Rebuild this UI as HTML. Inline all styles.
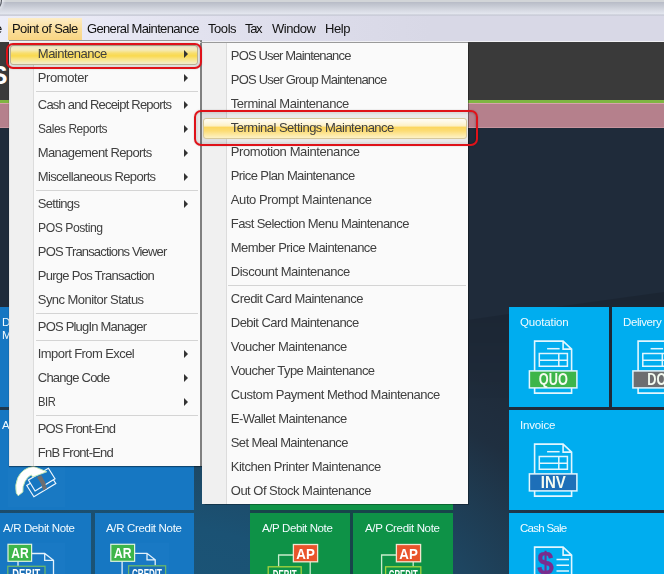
<!DOCTYPE html>
<html>
<head>
<meta charset="utf-8">
<title>Point of Sale - Terminal Settings Maintenance</title>
<style>
html,body{margin:0;padding:0;}
body{width:664px;height:574px;overflow:hidden;position:relative;background:#1f2b3a;font-family:"Liberation Sans",sans-serif;font-size:13px;color:#222;}
.abs{position:absolute;}
#bg{left:0;top:0;width:664px;height:574px;background:radial-gradient(ellipse 560px 330px at 150px 640px,#1a5679 0%,#1b5274 35%,#1e4560 60%,#1f2f40 85%,#1f2b3a 100%);}
#titlebar{left:0;top:0;width:664px;height:16px;background:linear-gradient(180deg,#d2d5d8 0,#d2d5d8 2px,#b9bdc8 2.5px,#c6cad4 6px,#d6d9e2 10px,#e4e7ef 14px,#bfc2ce 15px,#d8d9e6 16px);}
#orb{left:-16px;top:-11px;width:16px;height:20px;border:1.6px solid #50535b;border-radius:50%;box-shadow:2px 0 3px rgba(235,238,245,.8);}
#menubar{left:0;top:16px;width:664px;height:25px;background:linear-gradient(90deg,#ecedf8 0,#e9e9f5 90px,#e2e2ef 200px,#dcdcea 320px,#d8d8e6 430px,#d8d8e6 100%);border-bottom:1px solid #f0f0f4;}
.mbt{will-change:transform;position:absolute;top:16px;line-height:26px;white-space:nowrap;color:#111;letter-spacing:-0.55px;}
#mb-hl{left:8px;top:18px;width:74px;height:22px;background:linear-gradient(180deg,#fdedc6 0,#fbdf9c 50%,#f9d582 100%);}
#dark{left:0;top:42px;width:664px;height:58px;background:#3a3a3a;}
#greenline{left:0;top:100px;width:664px;height:3px;background:#7fb542;}
#pink{left:0;top:103px;width:664px;height:25px;background:#b5808c;box-shadow:inset 0 1px 0 #d7a3ab,inset 0 -1px 0 #c7959f;}
.tile{position:absolute;color:#fff;font-size:12px;letter-spacing:-0.5px;overflow:hidden;}
.tile .lbl{position:absolute;left:11px;top:8px;white-space:nowrap;}
.tl{will-change:transform;position:absolute;color:#f2fbff;font-size:11.5px;line-height:18px;white-space:nowrap;}
.cy{background:#00adef;}
.bl{background:#1677c2;}
.gr{background:#0e9247;}
.menu{position:absolute;background:#fafafa;box-sizing:border-box;}
.menu .gut{position:absolute;left:0;top:0;bottom:0;width:23px;background:#f0f0f0;border-right:1px solid #dcdcdc;}
.menu .it{position:absolute;left:0;right:0;height:24px;line-height:24px;white-space:nowrap;color:#404040;will-change:transform;letter-spacing:-0.5px;}
.menu .it b{font-weight:normal;position:absolute;}
.menu .sep{position:absolute;height:1px;background:#d4d4d4;}
.arr{position:absolute;left:174px;top:8px;width:0;height:0;border-left:4px solid #333;border-top:4px solid transparent;border-bottom:4px solid transparent;}
.tint{position:absolute;background:rgba(0,0,0,.065);}
.hl{position:absolute;border-radius:3px;box-sizing:border-box;}
.hl1{border:1px solid #bdb494;background:linear-gradient(180deg,#efe9cd 0,#f4eab8 22%,#f8de6c 40%,#f9d94f 55%,#f9e27c 70%,#f5ebb4 90%,#f0ebcf 100%);}
.hl2{border:1px solid #d6c89c;background:linear-gradient(180deg,#fffdf6 0,#fef7df 20%,#fdf0c4 37%,#fcd65e 43%,#fcdc74 62%,#fde8a0 82%,#fdf2c6 100%);}
.red{position:absolute;border:2.5px solid #df1219;border-radius:7px;box-sizing:border-box;box-shadow:inset 0 0 2.5px rgba(0,0,0,.4),0 0 1.5px rgba(0,0,0,.25);}
#logoS{left:-9.5px;top:59px;font-size:25.5px;font-weight:bold;color:#fff;line-height:32px;}
</style>
</head>
<body>
<div id="bg" class="abs"></div>
<div id="titlebar" class="abs"></div>
<div id="orb" class="abs"></div>
<div id="menubar" class="abs"></div>
<div id="dark" class="abs"></div>
<div id="greenline" class="abs"></div>
<div id="pink" class="abs"></div>
<div id="logoS" class="abs">S</div>

<div id="mb-hl" class="abs"></div>
<span class="mbt" style="left:-4.7px;letter-spacing:0.000px">e</span>
<span class="mbt" style="left:11.8px;letter-spacing:-0.618px">Point of Sale</span>
<span class="mbt" style="left:86.8px;letter-spacing:-0.656px">General Maintenance</span>
<span class="mbt" style="left:207.8px;letter-spacing:-0.440px">Tools</span>
<span class="mbt" style="left:244.9px;letter-spacing:-1.367px">Tax</span>
<span class="mbt" style="left:272.0px;letter-spacing:-0.490px">Window</span>
<span class="mbt" style="left:324.8px;letter-spacing:-0.417px">Help</span>
<svg class="abs" style="left:0;top:0" width="664" height="574" viewBox="0 0 664 574"><defs><linearGradient id="dg" x1="0" y1="0" x2="0" y2="1"><stop offset="0" stop-color="#000" stop-opacity=".13"/><stop offset="1" stop-color="#000" stop-opacity="0"/></linearGradient></defs><path d="M440 324 Q560 306 664 292 V400 H440 Z" fill="url(#dg)"/></svg>
<div class="tile bl" style="left:0;top:306.7px;width:9px;height:100px"></div>
<div class="tile bl" style="left:0;top:409.7px;width:194px;height:100px"></div>
<div class="tile bl" style="left:0;top:512.8px;width:91px;height:63px"></div>
<div class="tile bl" style="left:94.5px;top:512.8px;width:99.5px;height:63px"></div>
<div class="tile" style="left:250px;top:500px;width:202.5px;height:80px;background:#17454a"></div>
<div class="tile gr" style="left:250px;top:409.7px;width:202.5px;height:100px"></div>
<div class="tile gr" style="left:250px;top:512.8px;width:100px;height:63px"></div>
<div class="tile gr" style="left:353px;top:512.8px;width:99.5px;height:63px"></div>
<div class="tile cy" style="left:509.2px;top:306.7px;width:99.8px;height:100px"></div>
<div class="tile cy" style="left:612.1px;top:306.7px;width:60px;height:100px"></div>
<div class="tile cy" style="left:509px;top:409.7px;width:160px;height:100px"></div>
<div class="tile cy" style="left:509px;top:512.8px;width:160px;height:63px"></div>

<svg class="abs" style="left:0;top:0" width="664" height="574" viewBox="0 0 664 574" font-family="Liberation Sans, sans-serif">
<path d="M534.6 341.1 H563.1 L571.6 349.1 V393.1 H534.6 Z M563.1 341.1 V349.1 H571.6" fill="none" stroke="#e2f6fe" stroke-width="1.6"/>
<path d="M547.1 348.7 H559.6" stroke="#e2f6fe" stroke-width="1.5"/>
<path d="M539.3 353.5 H567.4 V366.2 H539.3 Z M539.3 360.2 H567.4 M558.8 353.5 V366.2" fill="none" stroke="#e2f6fe" stroke-width="1.5"/>
<rect x="529.4" y="370.9" width="47.5" height="17" fill="#3db54a" stroke="#e2f6fe" stroke-width="1.5"/>
<text x="553.3" y="385.3" font-size="16" font-weight="bold" fill="#f4fbf0" text-anchor="middle" textLength="29" lengthAdjust="spacingAndGlyphs">QUO</text>
<path d="M638.1 341.1 H666.6 L675.1 349.1 V393.1 H638.1 Z M666.6 341.1 V349.1 H675.1" fill="none" stroke="#e2f6fe" stroke-width="1.6"/>
<path d="M650.6 348.7 H663.1" stroke="#e2f6fe" stroke-width="1.5"/>
<path d="M642.8 353.5 H670.9 V366.2 H642.8 Z M642.8 360.2 H670.9 M662.3 353.5 V366.2" fill="none" stroke="#e2f6fe" stroke-width="1.5"/>
<rect x="632.9" y="370.9" width="47.5" height="17" fill="#6d6e70" stroke="#e2f6fe" stroke-width="1.5"/>
<text x="656.8" y="385.3" font-size="16" font-weight="bold" fill="#f4fbf0" text-anchor="middle" textLength="19" lengthAdjust="spacingAndGlyphs">DO</text>
<path d="M534.6 444.1 H563.1 L571.6 452.1 V496.1 H534.6 Z M563.1 444.1 V452.1 H571.6" fill="none" stroke="#e2f6fe" stroke-width="1.6"/>
<path d="M547.1 451.7 H559.6" stroke="#e2f6fe" stroke-width="1.5"/>
<path d="M539.3 456.5 H567.4 V469.2 H539.3 Z M539.3 463.2 H567.4 M558.8 456.5 V469.2" fill="none" stroke="#e2f6fe" stroke-width="1.5"/>
<rect x="529.4" y="473.9" width="47.5" height="17" fill="#1d6fb8" stroke="#e2f6fe" stroke-width="1.5"/>
<text x="553.3" y="488.3" font-size="16" font-weight="bold" fill="#f4fbf0" text-anchor="middle" textLength="25" lengthAdjust="spacingAndGlyphs">INV</text>
<path d="M534.6 547.1 H563.1 L571.6 555.1 V580 H534.6 Z M563.1 547.1 V555.1 H571.6" fill="none" stroke="#e2f6fe" stroke-width="1.6"/>
<path d="M556.5 559.5 H569 M556.5 565.3 H569 M556.5 571 H569" stroke="#e2f6fe" stroke-width="1.6"/>
<text x="537.3" y="574.2" font-size="32" font-weight="bold" fill="#7a2c8e" stroke="#7a2c8e" stroke-width=".4" textLength="16.5" lengthAdjust="spacingAndGlyphs">$</text>
<rect x="7.5" y="542.5" width="57.5" height="40" fill="#2380c9" opacity=".32"/>
<rect x="110" y="542.5" width="59" height="40" fill="#2380c9" opacity=".32"/>
<rect x="8" y="466" width="57" height="41" fill="#2380c9" opacity=".25"/>
<path d="M31.6 553.5 H44.7 L53.5 560.3 V580 M44.7 553.5 V560.3 H53.5 M18 561 V566" fill="none" stroke="#e3f1fb" stroke-width="1.3"/>
<rect x="8" y="544.3" width="23.6" height="17" fill="#3db54a" stroke="#dff3dc" stroke-width="1.2"/>
<text x="19.9" y="558.2" font-size="14.5" font-weight="bold" fill="#fff" text-anchor="middle" textLength="17.5" lengthAdjust="spacingAndGlyphs">AR</text>
<rect x="7.8" y="566.3" width="37.2" height="14" fill="#1a6fb6" stroke="#69b86c" stroke-width="1.3"/>
<text x="26.2" y="578.2" font-size="12" font-weight="bold" fill="#fff" text-anchor="middle" textLength="28" lengthAdjust="spacingAndGlyphs">DEBIT</text>
<path d="M134.6 553.3 H147 L155.2 559.8 V566 M147 553.3 V559.8 H155.2 M122.1 561 V580" fill="none" stroke="#e3f1fb" stroke-width="1.3"/>
<rect x="110.8" y="544.3" width="23.8" height="17" fill="#3db54a" stroke="#dff3dc" stroke-width="1.2"/>
<text x="122.7" y="558.2" font-size="14.5" font-weight="bold" fill="#fff" text-anchor="middle" textLength="17.5" lengthAdjust="spacingAndGlyphs">AR</text>
<rect x="128.6" y="565.8" width="37" height="14" fill="#1a6fb6" stroke="#69b86c" stroke-width="1.3"/>
<text x="147" y="578" font-size="12" font-weight="bold" fill="#fff" text-anchor="middle" textLength="30" lengthAdjust="spacingAndGlyphs">CREDIT</text>
<path d="M293.2 555 H278.6 V566.5 M310.2 562 V580" fill="none" stroke="#c9eccb" stroke-width="1.3"/>
<rect x="293.4" y="544.5" width="24.2" height="17.3" fill="#e9542b" stroke="#f3e5cf" stroke-width="1.3"/>
<text x="305.6" y="558.5" font-size="14.5" font-weight="bold" fill="#fff" text-anchor="middle" textLength="18.5" lengthAdjust="spacingAndGlyphs">AP</text>
<rect x="268.2" y="566.8" width="33" height="14" fill="#0e9448" stroke="#a9d43e" stroke-width="1.3"/>
<text x="284.7" y="578.7" font-size="12" font-weight="bold" fill="#fff" text-anchor="middle" textLength="24" lengthAdjust="spacingAndGlyphs">DEBIT</text>
<path d="M396.2 555 H381.6 V580 M413.2 562 V566.5" fill="none" stroke="#c9eccb" stroke-width="1.3"/>
<rect x="396.4" y="544.5" width="24.2" height="17.3" fill="#e9542b" stroke="#f3e5cf" stroke-width="1.3"/>
<text x="408.6" y="558.5" font-size="14.5" font-weight="bold" fill="#fff" text-anchor="middle" textLength="18.5" lengthAdjust="spacingAndGlyphs">AP</text>
<rect x="385.6" y="566.8" width="35.2" height="14" fill="#0e9448" stroke="#a9d43e" stroke-width="1.3"/>
<text x="403.3" y="578.7" font-size="12" font-weight="bold" fill="#fff" text-anchor="middle" textLength="29" lengthAdjust="spacingAndGlyphs">CREDIT</text>
<g fill="#1677c2" stroke="#eef6fd" stroke-width="1.2" stroke-linejoin="miter"><path d="M26.8 485.5 L33.9 496.8 L55.8 483.5 L48.7 472.2 Z"/><path d="M28.4 480 L35.1 491 L55 478.8 L48.4 468.3 Z"/></g>
<path d="M37 476.9 L41.3 475.3 Q45.8 482 46.8 488.6 L43.3 490.6 Q41.8 483.5 37 476.9 Z" fill="#6d6e70"/>
<path d="M16.3 493 Q14.5 485 17.8 477.7 Q22 468.5 33.5 466.3 L46.8 471.8 L32.7 477 L31.3 474.9 Q27.5 476.5 25 481.5 Q22.3 486.5 22.9 492 L18.2 495.7 Z" fill="#fff" stroke="#c2e8b0" stroke-width=".9" stroke-linejoin="round"/>
</svg>
<span class="tl" style="left:2.5px;top:518.5px;letter-spacing:-0.369px">A/R Debit Note</span>
<span class="tl" style="left:105.5px;top:518.5px;letter-spacing:-0.331px">A/R Credit Note</span>
<span class="tl" style="left:261.5px;top:518.5px;letter-spacing:-0.389px">A/P Debit Note</span>
<span class="tl" style="left:364.5px;top:518.5px;letter-spacing:-0.342px">A/P Credit Note</span>
<span class="tl" style="left:519.9px;top:313.0px;letter-spacing:-0.147px">Quotation</span>
<span class="tl" style="left:623.3px;top:313.0px;letter-spacing:-0.392px">Delivery</span>
<span class="tl" style="left:520.1px;top:415.8px;letter-spacing:-0.173px">Invoice</span>
<span class="tl" style="left:520.1px;top:518.8px;letter-spacing:-0.733px">Cash Sale</span>
<span class="tl" style="left:2.0px;top:312.5px;letter-spacing:0.000px">D</span>
<span class="tl" style="left:2.0px;top:325.5px;letter-spacing:0.000px">M</span>
<span class="tl" style="left:2.0px;top:415.8px;letter-spacing:0.000px">A</span>
<div class="abs" style="left:9px;top:40.3px;width:193px;height:3px;box-sizing:border-box;background:#f4f4f4;border-top:1px solid #9a9a9a;border-right:2px solid #808080"></div>
<div class="menu" style="left:9px;top:42px;width:193px;height:424px;border-right:2px solid #808080;border-top:1px solid #f4f4f4;border-left:1px solid #e6e6e6;box-shadow:0 1px 1px rgba(0,0,0,.4)"><div class="gut"></div>
<div class="tint" style="left:0;top:1.5px;width:190px;height:21.5px;border-radius:5px 5px 5px 5px"></div><div class="tint" style="left:186.5px;top:69.5px;width:6px;height:30.7px;border-radius:5px 0 0 5px"></div>
<div class="hl hl1" style="left:0px;top:2.2px;width:188.2px;height:19.8px"></div>
<div class="sep" style="left:26px;right:2px;top:48px"></div>
<div class="sep" style="left:26px;right:2px;top:147px"></div>
<div class="sep" style="left:26px;right:2px;top:270px"></div>
<div class="sep" style="left:26px;right:2px;top:297px"></div>
<div class="sep" style="left:26px;right:2px;top:372px"></div>
<div class="it" style="top:-1px"><b style="left:27.8px;letter-spacing:-0.495px">Maintenance</b><i class="arr"></i></div>
<div class="it" style="top:23px"><b style="left:27.8px;letter-spacing:-0.424px">Promoter</b><i class="arr"></i></div>
<div class="it" style="top:50px"><b style="left:27.8px;letter-spacing:-0.791px">Cash and Receipt Reports</b><i class="arr"></i></div>
<div class="it" style="top:74px"><b style="left:27.8px;letter-spacing:-0.500px;transform:scaleX(0.919);transform-origin:0 50%">Sales Reports</b><i class="arr"></i></div>
<div class="it" style="top:98px"><b style="left:27.8px;letter-spacing:-0.619px">Management Reports</b><i class="arr"></i></div>
<div class="it" style="top:122px"><b style="left:27.8px;letter-spacing:-0.661px">Miscellaneous Reports</b><i class="arr"></i></div>
<div class="it" style="top:149px"><b style="left:27.8px;letter-spacing:-0.698px">Settings</b><i class="arr"></i></div>
<div class="it" style="top:173px"><b style="left:27.8px;letter-spacing:-0.500px;transform:scaleX(0.938);transform-origin:0 50%">POS Posting</b></div>
<div class="it" style="top:197px"><b style="left:27.8px;letter-spacing:-0.836px">POS Transactions Viewer</b></div>
<div class="it" style="top:221px"><b style="left:27.8px;letter-spacing:-0.727px">Purge Pos Transaction</b></div>
<div class="it" style="top:245px"><b style="left:27.8px;letter-spacing:-0.557px">Sync Monitor Status</b></div>
<div class="it" style="top:272px"><b style="left:27.8px;letter-spacing:-0.803px">POS PlugIn Manager</b></div>
<div class="it" style="top:299px"><b style="left:27.8px;letter-spacing:-0.580px">Import From Excel</b><i class="arr"></i></div>
<div class="it" style="top:323px"><b style="left:27.8px;letter-spacing:-0.773px">Change Code</b><i class="arr"></i></div>
<div class="it" style="top:347px"><b style="left:27.8px;letter-spacing:-0.500px;transform:scaleX(0.861);transform-origin:0 50%">BIR</b><i class="arr"></i></div>
<div class="it" style="top:374px"><b style="left:27.8px;letter-spacing:-0.898px">POS Front-End</b></div>
<div class="it" style="top:398px"><b style="left:27.8px;letter-spacing:-0.772px">FnB Front-End</b></div>
</div>
<div class="menu" style="left:202px;top:42px;width:266.3px;height:462px;border-top:1px solid #9a9a9a;box-shadow:.5px .5px 1px rgba(0,0,0,.3)"><div class="gut" style="width:24px"></div>
<div class="tint" style="left:0;top:69.5px;width:266.5px;height:30.7px"></div>
<div class="hl hl2" style="left:1px;top:74.5px;width:263.5px;height:21px"></div>
<div class="sep" style="left:26px;right:2px;top:242px"></div>
<div class="it" style="top:1px"><b style="left:28.8px;letter-spacing:-0.841px">POS User Maintenance</b></div>
<div class="it" style="top:25px"><b style="left:28.8px;letter-spacing:-0.797px">POS User Group Maintenance</b></div>
<div class="it" style="top:49px"><b style="left:28.8px;letter-spacing:-0.463px">Terminal Maintenance</b></div>
<div class="it" style="top:73px"><b style="left:28.8px;letter-spacing:-0.509px">Terminal Settings Maintenance</b></div>
<div class="it" style="top:97px"><b style="left:28.8px;letter-spacing:-0.401px">Promotion Maintenance</b></div>
<div class="it" style="top:121px"><b style="left:28.8px;letter-spacing:-0.615px">Price Plan Maintenance</b></div>
<div class="it" style="top:145px"><b style="left:28.8px;letter-spacing:-0.410px">Auto Prompt Maintenance</b></div>
<div class="it" style="top:169px"><b style="left:28.8px;letter-spacing:-0.599px">Fast Selection Menu Maintenance</b></div>
<div class="it" style="top:193px"><b style="left:28.8px;letter-spacing:-0.555px">Member Price Maintenance</b></div>
<div class="it" style="top:217px"><b style="left:28.8px;letter-spacing:-0.481px">Discount Maintenance</b></div>
<div class="it" style="top:244px"><b style="left:28.8px;letter-spacing:-0.538px">Credit Card Maintenance</b></div>
<div class="it" style="top:268px"><b style="left:28.8px;letter-spacing:-0.557px">Debit Card Maintenance</b></div>
<div class="it" style="top:292px"><b style="left:28.8px;letter-spacing:-0.515px">Voucher Maintenance</b></div>
<div class="it" style="top:316px"><b style="left:28.8px;letter-spacing:-0.566px">Voucher Type Maintenance</b></div>
<div class="it" style="top:340px"><b style="left:28.8px;letter-spacing:-0.476px">Custom Payment Method Maintenance</b></div>
<div class="it" style="top:364px"><b style="left:28.8px;letter-spacing:-0.536px">E-Wallet Maintenance</b></div>
<div class="it" style="top:388px"><b style="left:28.8px;letter-spacing:-0.619px">Set Meal Maintenance</b></div>
<div class="it" style="top:412px"><b style="left:28.8px;letter-spacing:-0.497px">Kitchen Printer Maintenance</b></div>
<div class="it" style="top:436px"><b style="left:28.8px;letter-spacing:-0.516px">Out Of Stock Maintenance</b></div>
</div>
<div class="red" style="left:6.2px;top:42.6px;width:196.3px;height:26.6px"></div>
<div class="red" style="left:193.5px;top:110px;width:284.5px;height:35.7px"></div>
</body>
</html>
